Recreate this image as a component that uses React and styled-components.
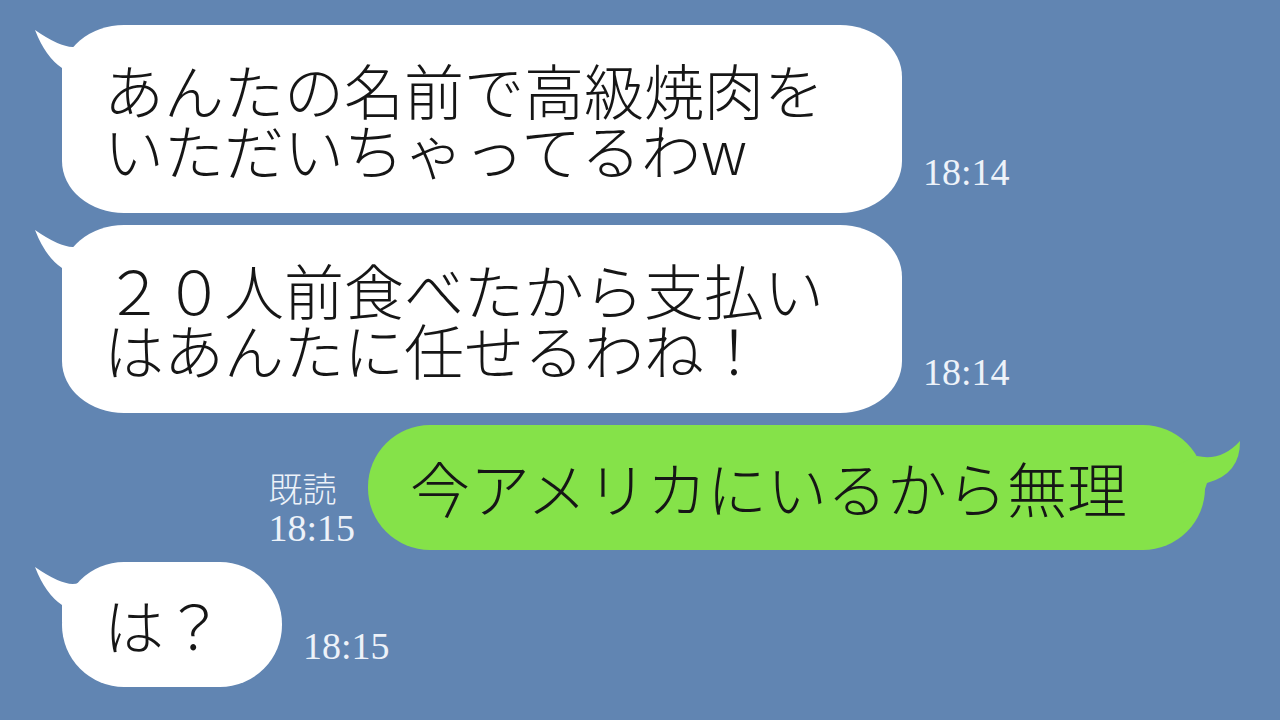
import React from 'react';
import styled, { createGlobalStyle } from 'styled-components';

const GlobalStyle = createGlobalStyle`
  html, body {
    margin: 0;
    padding: 0;
    background: #6185b2;
  }
`;

const Screen = styled.div`
  background: #6185b2;
  box-sizing: border-box;
  display: flex;
  flex-direction: column;
  gap: 12px;
  height: 720px;
  overflow: hidden;
  padding-top: 25px;
  width: 1280px;
`;

const Row = styled.div`
  align-items: flex-end;
  display: flex;
  justify-content: ${({ $mine }) => ($mine ? 'flex-end' : 'flex-start')};
  padding: ${({ $mine }) => ($mine ? '0 75px 0 0' : '0 0 0 62px')};
`;

const Bubble = styled.div`
  background: ${({ $mine }) => ($mine ? '#85e249' : '#ffffff')};
  border-radius: ${({ $lines }) => ($lines > 1 ? '62px / 52px' : '62px')};
  color: #161616;
  font-family: 'Noto Sans CJK JP', 'Noto Sans', sans-serif;
  font-size: 60px;
  font-weight: 300;
  line-height: 60px;
  padding: ${({ $lines }) => ($lines > 1 ? '34px' : '32px')}
    ${({ $padRight }) => $padRight || 78}px
    ${({ $lines }) => ($lines > 1 ? '34px' : '33px')} 42px;
  position: relative;
  white-space: nowrap;
`;

const Line = styled.span`
  display: block;
  position: relative;
`;

const Tail = styled.svg`
  height: 80px;
  pointer-events: none;
  position: absolute;
  top: 0;
  width: 70px;
  ${({ $mine }) => ($mine ? 'right: -40px;' : 'left: -30px;')}
`;

const Time = styled.span`
  color: #edf2f9;
  font-family: 'Liberation Serif', 'DejaVu Serif', serif;
  font-size: 38px;
  line-height: 38px;
  margin: 0 0 22px 21px;
`;

const ReadMark = styled.div`
  color: #edf2f9;
  display: flex;
  flex-direction: column;
  margin: 0 13px 2px 0;
`;

const ReadLabel = styled.span`
  font-family: 'Noto Sans CJK JP', sans-serif;
  font-size: 34px;
  font-weight: 200;
  line-height: 40px;
`;

const ReadTime = styled.span`
  font-family: 'Liberation Serif', 'DejaVu Serif', serif;
  font-size: 38px;
  line-height: 40px;
`;

const LeftTail = () => (
  <Tail viewBox="0 0 70 80">
    <path
      d="M3 5 Q39 30 51 18 L72 30 L72 60 L30 60 L30 43 Q13.5 32 3 5 Z"
      fill="#ffffff"
    />
  </Tail>
);

const RightTail = () => (
  <Tail $mine viewBox="0 0 70 80">
    <path
      d="M65 16 Q46.5 36.5 22 31 L2 40 L2 70 L28 70 L32 58 Q65.5 49 65 16 Z"
      fill="#85e249"
    />
  </Tail>
);

const messages = [
  { lines: ['あんたの名前で高級焼肉を', 'いただいちゃってるわw'], time: '18:14' },
  { lines: ['２０人前食べたから支払い', 'はあんたに任せるわね！'], time: '18:14' },
  { mine: true, lines: ['今アメリカにいるから無理'], time: '18:15' },
  { lines: ['は？'], time: '18:15', padRight: 58 },
];

const App = () => (
  <>
    <GlobalStyle />
    <Screen>
      {messages.map((m, i) =>
        m.mine ? (
          <Row $mine key={i}>
            <ReadMark>
              <ReadLabel>既読</ReadLabel>
              <ReadTime>{m.time}</ReadTime>
            </ReadMark>
            <Bubble $mine $lines={m.lines.length}>
              <RightTail />
              {m.lines.map((l) => (
                <Line key={l}>{l}</Line>
              ))}
            </Bubble>
          </Row>
        ) : (
          <Row key={i}>
            <Bubble $lines={m.lines.length} $padRight={m.padRight}>
              <LeftTail />
              {m.lines.map((l) => (
                <Line key={l}>{l}</Line>
              ))}
            </Bubble>
            <Time>{m.time}</Time>
          </Row>
        )
      )}
    </Screen>
  </>
);

export default App;
